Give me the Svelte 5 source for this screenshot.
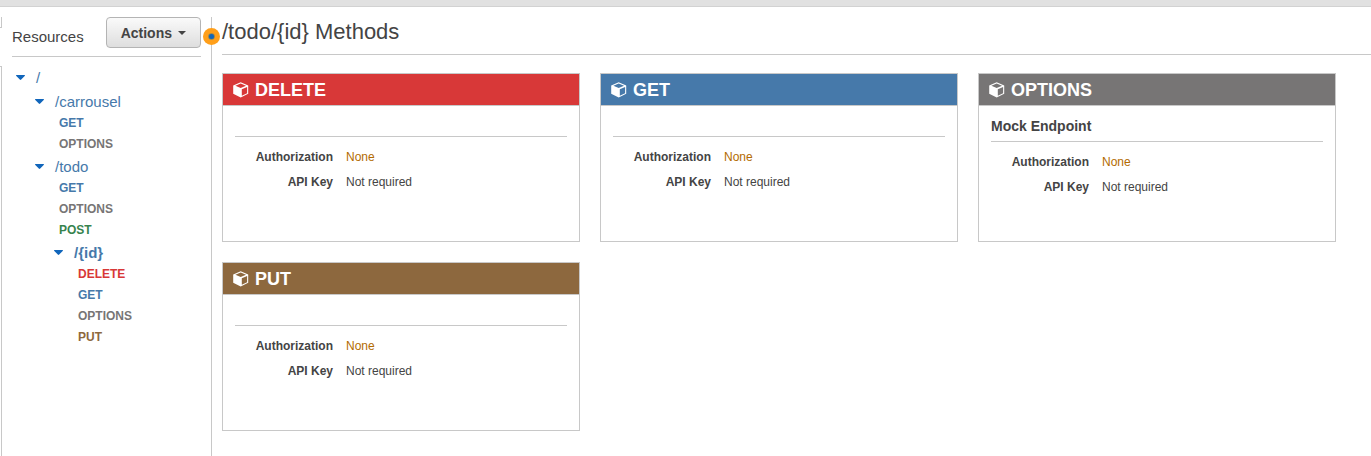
<script>
  const tree = [
    {
      path: '/',
      methods: [],
      children: [
        { path: '/carrousel', methods: ['GET', 'OPTIONS'], children: [] },
        {
          path: '/todo',
          methods: ['GET', 'OPTIONS', 'POST'],
          children: [
            {
              path: '/{id}',
              selected: true,
              methods: ['DELETE', 'GET', 'OPTIONS', 'PUT'],
              children: []
            }
          ]
        }
      ]
    }
  ];

  const cards = [
    { method: 'DELETE', endpoint: '' },
    { method: 'GET', endpoint: '' },
    { method: 'OPTIONS', endpoint: 'Mock Endpoint' },
    { method: 'PUT', endpoint: '' }
  ];
</script>

{#snippet branch(nodes)}
  <ul class="branch">
    {#each nodes as node}
      <li>
        <div class="node">
          <button class="toggle" type="button" aria-label="Collapse {node.path}">
            <svg width="9" height="5" viewBox="0 0 9 5"><path d="M0.3 0H8.7Q9.2 0.5 8.7 1L5.2 4.6Q4.5 5.2 3.8 4.6L0.3 1Q-0.2 0.5 0.3 0Z" fill="#1166bb" /></svg>
          </button>
          <a class="path" class:selected={node.selected} href="#{node.path}">{node.path}</a>
        </div>
        {#if node.methods.length}
          <ul class="methods">
            {#each node.methods as method}
              <li><a class="method {method.toLowerCase()}" href="#{node.path}/{method}">{method}</a></li>
            {/each}
          </ul>
        {/if}
        {#if node.children.length}
          {@render branch(node.children)}
        {/if}
      </li>
    {/each}
  </ul>
{/snippet}

<div class="page">
  <div class="topbar"></div>
  <div class="columns">
    <div class="edge"><span class="edge-top"></span><span class="edge-rest"></span></div>
    <aside class="sidebar">
      <header class="side-head">
        <h2>Resources</h2>
        <button class="actions" type="button">
          Actions
          <svg width="8" height="4" viewBox="0 0 8 4"><path d="M0 0H8L4 4Z" fill="#444" /></svg>
        </button>
      </header>
      <nav aria-label="Resources">{@render branch(tree)}</nav>
    </aside>
    <div class="splitter">
      <button class="handle" type="button" aria-label="Resize panel">
        <svg width="17" height="17" viewBox="0 0 17 17">
          <circle cx="8.5" cy="8.5" r="8.5" fill="#ff9f1a" />
          <circle cx="8.5" cy="8.5" r="3.3" fill="#8d8257" />
          <circle cx="8.5" cy="8.5" r="2.5" fill="#1166bb" />
        </svg>
      </button>
    </div>
    <main>
      <h1>/todo/&#123;id&#125; Methods</h1>
      <div class="cards">
        {#each cards as card}
          <section class="card">
            <h3 class="bar {card.method.toLowerCase()}">
              <svg width="16" height="16" viewBox="0 0 16 16" aria-hidden="true">
                <path d="M0.2 3.4L7.7 0.3L15.2 3.4V11.8L7.7 15.4L0.2 11.8Z" fill="#fff" />
                <path class="cut" d="M2.4 3.7L7.7 1.5L13 3.7L7.7 5.9Z" />
                <path class="cut" d="M8.8 7.2L14.1 5V11.2L8.8 13.7Z" />
              </svg>
              {card.method}
            </h3>
            <div class="body">
              <h4 class:blank={!card.endpoint}>{card.endpoint}</h4>
              <dl>
                <dt>Authorization</dt>
                <dd class="warn">None</dd>
                <dt>API Key</dt>
                <dd>Not required</dd>
              </dl>
            </div>
          </section>
        {/each}
      </div>
    </main>
  </div>
</div>

<style>
  :global(body) {
    margin: 0;
    background: #fff;
  }
  .page {
    display: flex;
    flex-direction: column;
    min-height: 100vh;
    box-sizing: border-box;
    color: #444;
    font-family: 'Liberation Sans', Arial, sans-serif;
    font-size: 12px;
  }
  .topbar {
    height: 6px;
    background: #e1e1e1;
    border-bottom: 1px solid #d2d2d2;
  }
  .columns {
    display: flex;
    flex: 1;
    padding-top: 10px;
  }
  .edge {
    display: flex;
    flex-direction: column;
    justify-content: space-between;
    gap: 38px;
    width: 2px;
  }
  .edge span {
    box-sizing: border-box;
    border-right: 1px solid #c8c8c8;
  }
  .edge-top {
    height: 11px;
    border-bottom: 1px solid #c8c8c8;
  }
  .edge-rest {
    flex: 1;
    border-top: 1px solid #c8c8c8;
  }
  .sidebar {
    width: 189px;
    padding: 0 10px;
  }
  .side-head {
    display: flex;
    justify-content: space-between;
    height: 39px;
    border-bottom: 1px solid #c8c8c8;
  }
  h1, h2, h3, h4, ul, dl, dd {
    margin: 0;
    padding: 0;
  }
  ul {
    list-style: none;
  }
  a {
    text-decoration: none;
  }
  h2 {
    font-size: 15px;
    font-weight: 400;
    line-height: 40px;
  }
  button {
    font-family: inherit;
    cursor: pointer;
  }
  .actions {
    display: flex;
    align-items: center;
    gap: 6px;
    height: 31px;
    padding: 0 14px;
    border: 1px solid #b4b4b4;
    border-radius: 4px;
    background: linear-gradient(#fafafa, #dedede);
    color: #444;
    font-size: 14px;
    font-weight: 700;
  }
  nav {
    padding-top: 9px;
  }
  .branch .branch {
    padding-left: 19px;
  }
  nav > .branch > li > .node {
    padding-bottom: 1px;
  }
  .node {
    display: flex;
    align-items: center;
    gap: 11px;
    height: 23px;
    padding-left: 4px;
  }
  .toggle {
    display: flex;
    padding: 0;
    border: 0;
    background: none;
  }
  .path {
    color: #4679aa;
    font-size: 15px;
    line-height: 23px;
  }
  .selected {
    font-weight: 700;
  }
  .methods {
    padding-left: 28px;
  }
  .method {
    display: block;
    font-weight: 700;
    line-height: 21px;
  }
  .method.get { color: #4679aa; }
  .method.options { color: #777575; }
  .method.post { color: #37834e; }
  .method.delete { color: #d83838; }
  .method.put { color: #8d683e; }
  .splitter {
    position: relative;
    width: 1px;
    background: #c8c8c8;
  }
  .handle {
    position: absolute;
    top: 11px;
    left: -8px;
    display: flex;
    padding: 0;
    border: 0;
    border-radius: 50%;
    background: none;
    cursor: col-resize;
  }
  main {
    flex: 1;
    min-width: 0;
    padding-left: 10px;
  }
  h1 {
    height: 37px;
    border-bottom: 1px solid #c8c8c8;
    font-size: 22px;
    font-weight: 400;
    line-height: 30px;
  }
  .cards {
    display: grid;
    grid-template-columns: repeat(auto-fill, 358px);
    gap: 20px;
    padding: 18px 0 20px;
  }
  .card {
    box-sizing: border-box;
    min-height: 169px;
    border: 1px solid #c8c8c8;
  }
  .bar {
    display: flex;
    align-items: center;
    gap: 6px;
    height: 30px;
    padding: 1px 0 0 10px;
    border-bottom: 1px solid #c8c8c8;
    color: #fff;
    font-size: 18px;
    font-weight: 700;
    background: var(--tone);
  }
  .bar.delete { --tone: #d83838; }
  .bar.get { --tone: #4679aa; }
  .bar.options { --tone: #777575; }
  .bar.put { --tone: #8d683e; }
  .cut {
    fill: var(--tone);
  }
  .body {
    padding: 10px 12px;
  }
  h4 {
    height: 25px;
    border-bottom: 1px solid #c8c8c8;
    font-size: 14px;
    line-height: 20px;
  }
  h4.blank {
    height: 20px;
  }
  dl {
    display: grid;
    grid-template-columns: 98px 1fr;
    column-gap: 13px;
    padding-top: 8px;
    line-height: 25px;
  }
  dt {
    font-weight: 700;
    text-align: right;
  }
  .warn {
    color: #b36b00;
  }
</style>
